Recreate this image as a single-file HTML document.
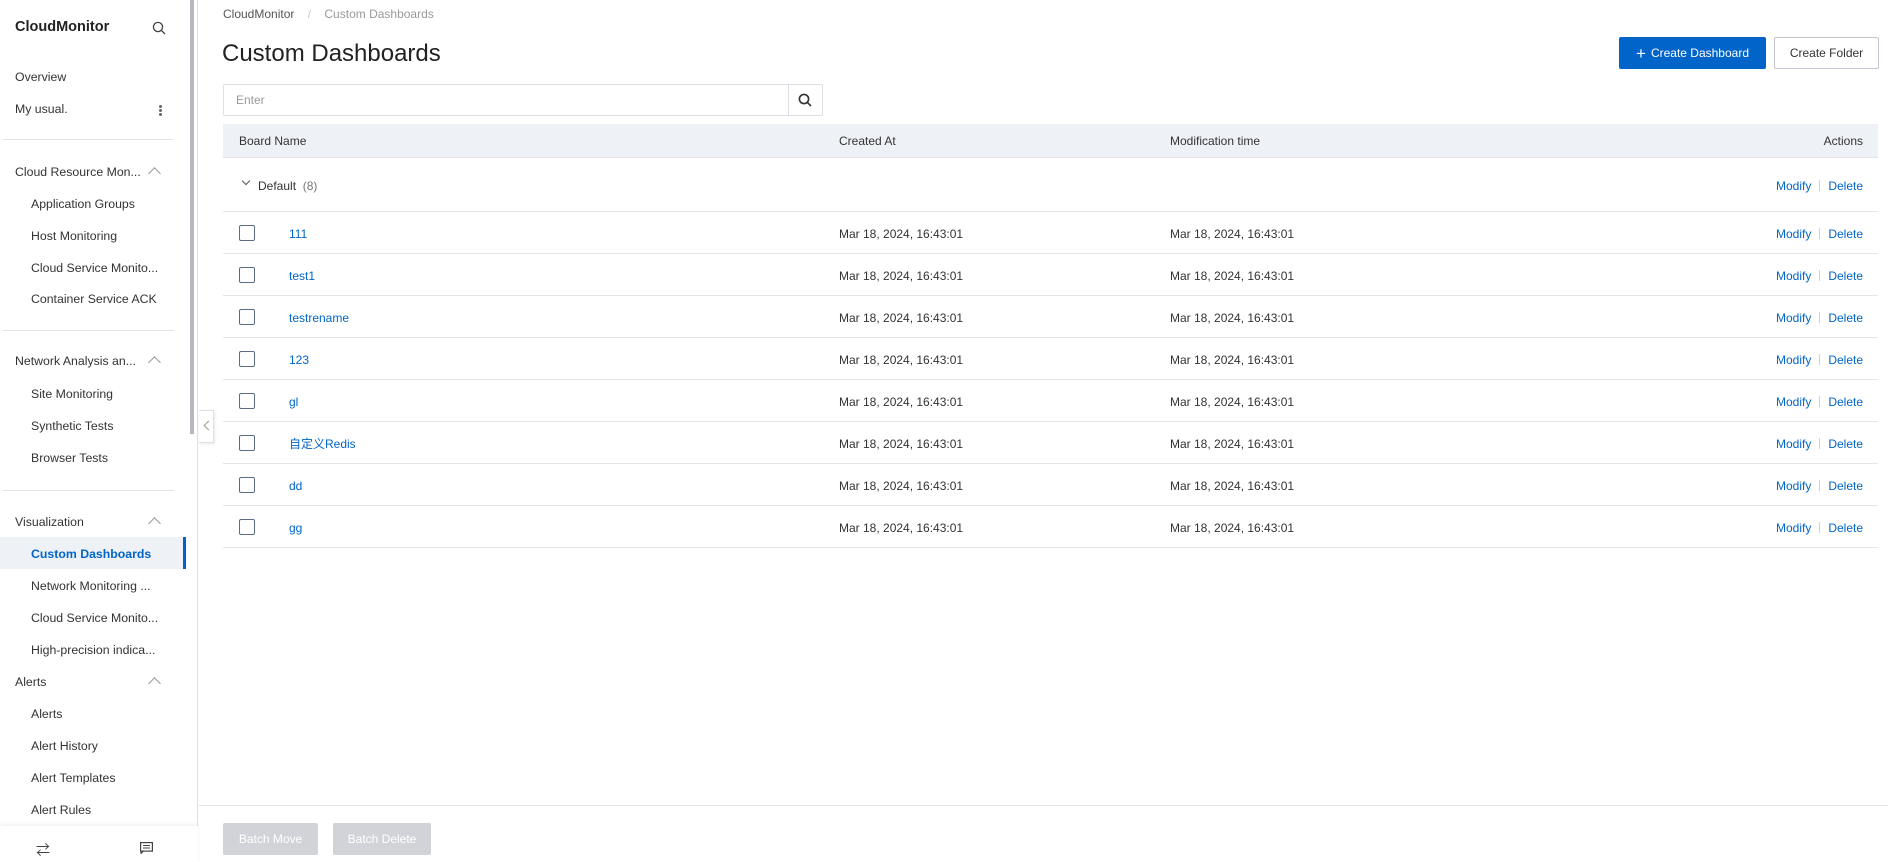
<!DOCTYPE html>
<html><head><meta charset="utf-8"><style>
*{box-sizing:border-box;margin:0;padding:0}
body{width:1888px;height:862px;overflow:hidden;background:#fff;font-family:"Liberation Sans","Noto Sans CJK SC",sans-serif;font-size:12px;color:#333;position:relative}
.abs{position:absolute}
.side{left:0;top:0;width:198px;height:862px;border-right:1px solid #dcdfe6;background:#fff}
.si{position:absolute;left:15px;font-size:12.3px;color:#333;line-height:16px}
.sub{left:31px}
.div{position:absolute;left:3px;width:171px;height:1px;background:#e3e3e3}
.chev{position:absolute;left:150px;width:9px;height:9px;border-left:1.3px solid #999;border-top:1.3px solid #999;transform:rotate(45deg)}
.row{position:absolute;left:223px;width:1655px;height:42px;border-bottom:1px solid #e3e6eb}
.cb{position:absolute;left:16px;top:13px;width:16px;height:16px;border:1.3px solid #5a6b85;border-radius:2px}
.t{position:absolute;top:14px;line-height:16px}
.blue{color:#0064c8}
.act{position:absolute;right:15px;top:14px;color:#0064c8;line-height:16px}
.act i{display:inline-block;width:1px;height:11px;background:#c9d3df;margin:0 8px;vertical-align:-1px}
</style></head><body>
<div class="abs side">
  <div class="si" style="top:19px;font-weight:bold;font-size:14.5px;color:#222">CloudMonitor</div>
  <svg class="abs" style="left:152px;top:21px" width="14" height="14" viewBox="0 0 14 14"><circle cx="6" cy="6" r="4.6" fill="none" stroke="#444" stroke-width="1.3"/><line x1="9.4" y1="9.4" x2="13" y2="13" stroke="#444" stroke-width="1.3"/></svg>
  <div class="si" style="top:69px">Overview</div>
  <div class="si" style="top:101px">My usual.</div>
  <div class="abs" style="left:159px;top:105px;width:3px;height:3px;border-radius:2px;background:#666;box-shadow:0 4px 0 #666,0 8px 0 #666"></div>
  <div class="div" style="top:139px"></div>
  <div class="si" style="top:164px">Cloud Resource Mon...</div><div class="chev" style="top:169px"></div>
  <div class="si sub" style="top:196px">Application Groups</div>
  <div class="si sub" style="top:228px">Host Monitoring</div>
  <div class="si sub" style="top:260px">Cloud Service Monito...</div>
  <div class="si sub" style="top:291px">Container Service ACK</div>
  <div class="div" style="top:330px"></div>
  <div class="si" style="top:353px">Network Analysis an...</div><div class="chev" style="top:358px"></div>
  <div class="si sub" style="top:386px">Site Monitoring</div>
  <div class="si sub" style="top:418px">Synthetic Tests</div>
  <div class="si sub" style="top:450px">Browser Tests</div>
  <div class="div" style="top:490px"></div>
  <div class="si" style="top:514px">Visualization</div><div class="chev" style="top:519px"></div>
  <div class="abs" style="left:0;top:537px;width:186px;height:32px;background:#eef1f6;border-right:3px solid #0064c8"></div>
  <div class="si sub" style="top:546px;color:#0064c8;font-weight:bold">Custom Dashboards</div>
  <div class="si sub" style="top:578px">Network Monitoring ...</div>
  <div class="si sub" style="top:610px">Cloud Service Monito...</div>
  <div class="si sub" style="top:642px">High-precision indica...</div>
  <div class="si" style="top:674px">Alerts</div><div class="chev" style="top:679px"></div>
  <div class="si sub" style="top:706px">Alerts</div>
  <div class="si sub" style="top:738px">Alert History</div>
  <div class="si sub" style="top:770px">Alert Templates</div>
  <div class="si sub" style="top:802px">Alert Rules</div>
  <div class="abs" style="left:0;top:826px;width:198px;height:36px;background:#fff;box-shadow:0 -2px 4px rgba(0,0,0,.06)"></div>
  <div class="abs" style="left:36px;top:840px;font-size:14px;color:#444">⇄</div>
  <svg class="abs" style="left:140px;top:842px" width="13" height="12" viewBox="0 0 13 12"><rect x="0.6" y="0.6" width="11.8" height="8.5" fill="none" stroke="#444" stroke-width="1.2"/><path d="M3 3.5h7M3 6h7M1 9v2.5l2.5-2.5" fill="none" stroke="#444" stroke-width="1.1"/></svg>
</div>
<div class="abs" style="left:190px;top:0;width:4px;height:434px;background:#b4b8bf"></div>
<div class="abs" style="left:199px;top:410px;width:15px;height:33px;background:#fff;border:1px solid #dcdfe6;border-left:none;box-shadow:1px 1px 3px rgba(0,0,0,.08)"></div>
<div class="abs" style="left:205px;top:422px;width:7px;height:7px;border-left:1.2px solid #999;border-bottom:1.2px solid #999;transform:rotate(45deg)"></div>

<div class="abs" style="left:223px;top:7px;color:#555;font-size:12px">CloudMonitor <span style="color:#ccc;margin:0 10px">/</span> <span style="color:#999">Custom Dashboards</span></div>
<div class="abs" style="left:222px;top:40px;font-size:24px;color:#222">Custom Dashboards</div>
<div class="abs" style="left:1619px;top:37px;width:147px;height:32px;background:#0064c8;border-radius:2px;color:#fff;text-align:center;line-height:32px"><span style="font-size:17px;vertical-align:-2px;margin-right:5px">+</span>Create Dashboard</div>
<div class="abs" style="left:1774px;top:37px;width:105px;height:32px;border:1px solid #c4c6cf;border-radius:2px;color:#333;text-align:center;line-height:30px">Create Folder</div>

<div class="abs" style="left:223px;top:84px;width:600px;height:32px;border:1px solid #dcdfe6;border-radius:2px"></div>
<div class="abs" style="left:236px;top:93px;color:#999">Enter</div>
<div class="abs" style="left:788px;top:84px;width:1px;height:32px;background:#dcdfe6"></div>
<svg class="abs" style="left:798px;top:93px" width="14" height="14" viewBox="0 0 14 14"><circle cx="6" cy="6" r="4.6" fill="none" stroke="#333" stroke-width="1.6"/><line x1="9.4" y1="9.4" x2="13" y2="13" stroke="#333" stroke-width="1.6"/></svg>

<div class="abs" style="left:223px;top:124px;width:1655px;height:34px;background:#eef1f6;border-bottom:1px solid #e0e3e8"></div>
<div class="abs" style="left:239px;top:134px">Board Name</div>
<div class="abs" style="left:839px;top:134px">Created At</div>
<div class="abs" style="left:1170px;top:134px">Modification time</div>
<div class="abs" style="right:25px;top:134px">Actions</div>

<div class="row" style="top:158px;height:54px">
  <div class="abs" style="left:20px;top:20px;width:6px;height:6px;border-right:1.2px solid #555;border-bottom:1.2px solid #555;transform:rotate(45deg)"></div>
  <div class="t" style="left:35px;top:20px">Default <span style="color:#777">&nbsp;(8)</span></div>
  <div class="act" style="top:20px">Modify<i></i>Delete</div>
</div>
<div class="row" style="top:212px"><div class="cb"></div><div class="t blue" style="left:66px">111</div><div class="t" style="left:616px">Mar 18, 2024, 16:43:01</div><div class="t" style="left:947px">Mar 18, 2024, 16:43:01</div><div class="act">Modify<i></i>Delete</div></div>
<div class="row" style="top:254px"><div class="cb"></div><div class="t blue" style="left:66px">test1</div><div class="t" style="left:616px">Mar 18, 2024, 16:43:01</div><div class="t" style="left:947px">Mar 18, 2024, 16:43:01</div><div class="act">Modify<i></i>Delete</div></div>
<div class="row" style="top:296px"><div class="cb"></div><div class="t blue" style="left:66px">testrename</div><div class="t" style="left:616px">Mar 18, 2024, 16:43:01</div><div class="t" style="left:947px">Mar 18, 2024, 16:43:01</div><div class="act">Modify<i></i>Delete</div></div>
<div class="row" style="top:338px"><div class="cb"></div><div class="t blue" style="left:66px">123</div><div class="t" style="left:616px">Mar 18, 2024, 16:43:01</div><div class="t" style="left:947px">Mar 18, 2024, 16:43:01</div><div class="act">Modify<i></i>Delete</div></div>
<div class="row" style="top:380px"><div class="cb"></div><div class="t blue" style="left:66px">gl</div><div class="t" style="left:616px">Mar 18, 2024, 16:43:01</div><div class="t" style="left:947px">Mar 18, 2024, 16:43:01</div><div class="act">Modify<i></i>Delete</div></div>
<div class="row" style="top:422px"><div class="cb"></div><div class="t blue" style="left:66px">自定义Redis</div><div class="t" style="left:616px">Mar 18, 2024, 16:43:01</div><div class="t" style="left:947px">Mar 18, 2024, 16:43:01</div><div class="act">Modify<i></i>Delete</div></div>
<div class="row" style="top:464px"><div class="cb"></div><div class="t blue" style="left:66px">dd</div><div class="t" style="left:616px">Mar 18, 2024, 16:43:01</div><div class="t" style="left:947px">Mar 18, 2024, 16:43:01</div><div class="act">Modify<i></i>Delete</div></div>
<div class="row" style="top:506px"><div class="cb"></div><div class="t blue" style="left:66px">gg</div><div class="t" style="left:616px">Mar 18, 2024, 16:43:01</div><div class="t" style="left:947px">Mar 18, 2024, 16:43:01</div><div class="act">Modify<i></i>Delete</div></div>

<div class="abs" style="left:199px;top:805px;width:1689px;height:1px;background:#e3e3e3"></div>
<div class="abs" style="left:223px;top:823px;width:95px;height:32px;background:#d1d3d8;border-radius:2px;color:#fff;text-align:center;line-height:32px">Batch Move</div>
<div class="abs" style="left:333px;top:823px;width:98px;height:32px;background:#d1d3d8;border-radius:2px;color:#fff;text-align:center;line-height:32px">Batch Delete</div>
</body></html>
